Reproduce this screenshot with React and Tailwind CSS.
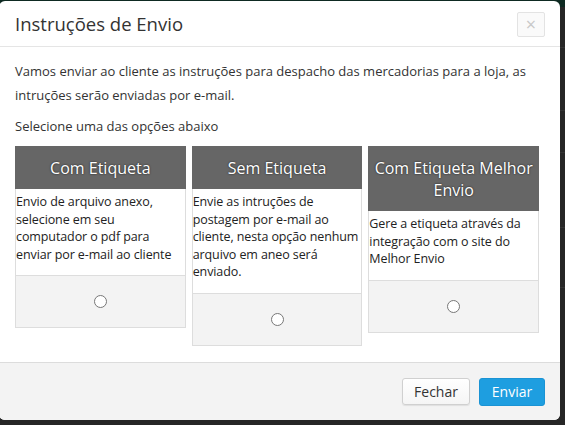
import React from 'react';

const options = [
  {
    title: 'Com Etiqueta',
    text: 'Envio de arquivo anexo, selecione em seu computador o pdf para enviar por e-mail ao cliente',
  },
  {
    title: 'Sem Etiqueta',
    text: 'Envie as intruções de postagem por e-mail ao cliente, nesta opção nenhum arquivo em aneo será enviado.',
  },
  {
    title: 'Com Etiqueta Melhor Envio',
    text: 'Gere a etiqueta através da integração com o site do Melhor Envio',
  },
];

export default function App() {
  return (
    <div className="relative w-[565px] h-[425px] overflow-hidden bg-[#262626] font-['Open_Sans',sans-serif]">
      {/* page behind the overlay */}
      <div className="absolute inset-x-0 top-0 h-[7px] bg-[#0e2a22]" />
      <div className="absolute right-0 top-[47px] w-[6px] border-t border-[#333]" />
      <div className="absolute right-0 top-[110px] w-[6px] border-t border-[#333]" />
      <div className="absolute right-0 top-[152px] w-[6px] border-t border-[#333]" />
      <div className="absolute right-0 top-[227px] w-[6px] border-t border-[#333]" />
      <div className="absolute right-0 top-[287px] w-[6px] border-t border-[#333]" />

      <div className="relative ml-[-1px] mt-[1px] w-[561px] h-[419px] bg-white rounded-[6px] overflow-hidden flex flex-col">
        <div className="h-[46px] flex items-center justify-between pl-[16px] pr-[15px] border-b border-[#e5e5e5]">
          <h1 className="text-[18.5px] text-[#333] leading-none mt-[1px]">Instruções de Envio</h1>
          <button className="w-[28px] h-[25px] mt-[1px] border border-[#e3e3e3] bg-[#fafafa] rounded-[2px] text-[#c8c8c8] text-[18px] leading-none flex items-center justify-center">
            ×
          </button>
        </div>

        <div className="flex-1 pl-[16px] pr-[21px] pt-[12px] text-[13px] text-[#333]">
          <p className="leading-[24px]">
            Vamos enviar ao cliente as instruções para despacho das mercadorias para a loja, as intruções serão enviadas por e-mail.
          </p>
          <p className="mt-[7px] leading-[24px]">Selecione uma das opções abaixo</p>
          <div className="mt-[8px] flex items-start gap-[6px]">
            {options.map((o, i) => (
              <div key={i} className="w-[171px] flex flex-col">
                <div className="bg-[#666] text-white text-[16px] leading-[22px] text-center px-[4px] py-[10.5px] [text-shadow:0_0_2px_rgba(0,0,0,0.8)]">
                  {o.title}
                </div>
                <div className="border-x border-[#ddd] pt-[4px] pb-[12px] text-[12.5px] tracking-[-0.1px] leading-[17.5px] text-[#222]">
                  {o.text}
                </div>
                <div className="h-[53px] bg-[#f3f3f3] border border-[#ddd] flex items-center justify-center">
                  <span className="w-[13px] h-[13px] rounded-full border border-[#777] bg-white" />
                </div>
              </div>
            ))}
          </div>
        </div>

        <div className="h-[58px] bg-[#f3f3f3] border-t border-[#dcdcdc] flex items-center justify-end gap-[9px] pr-[15px]">
          <button className="w-[68px] h-[27px] border border-[#d0d0d0] rounded-[3px] bg-gradient-to-b from-white to-[#f5f5f5] shadow-[0_1px_1px_rgba(0,0,0,0.08)] text-[14px] text-[#333]">
            Fechar
          </button>
          <button className="w-[66px] h-[28px] rounded-[3px] bg-[#1e9ee0] border border-[#1a93d4] text-[14px] text-white">
            Enviar
          </button>
        </div>
      </div>
    </div>
  );
}
